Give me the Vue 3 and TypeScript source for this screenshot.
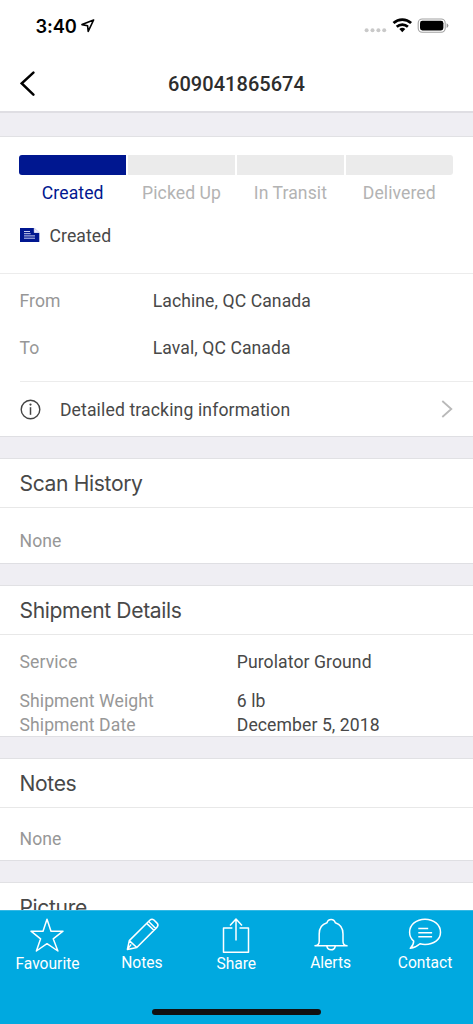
<script setup lang="ts">
interface Step { label: string; active: boolean }
interface Row { label: string; value: string }

const trackingNumber = '609041865674'
const steps: Step[] = [
  { label: 'Created', active: true },
  { label: 'Picked Up', active: false },
  { label: 'In Transit', active: false },
  { label: 'Delivered', active: false },
]
const route: Row[] = [
  { label: 'From', value: 'Lachine, QC Canada' },
  { label: 'To', value: 'Laval, QC Canada' },
]
const details: Row[] = [
  { label: 'Service', value: 'Purolator Ground' },
  { label: 'Shipment Weight', value: '6 lb' },
  { label: 'Shipment Date', value: 'December 5, 2018' },
]
</script>

<template>
  <div class="screen">
    <header class="top">
      <div class="status">
        <span class="time">3:40</span>
        <svg class="loc" width="14" height="14" viewBox="0 0 14 14"><path d="M12.6 1 1 5.6l5.6 1.2.6 5.6z" fill="none" stroke="#000" stroke-width="1.6" stroke-linejoin="round" /></svg>
        <svg class="indicators" width="86" height="16" viewBox="0 0 86 16">
          <g fill="#c9c9c9"><circle cx="3.6" cy="12.2" r="2" /><circle cx="9.5" cy="12.2" r="2" /><circle cx="15.4" cy="12.2" r="2" /><circle cx="21.2" cy="12.2" r="2" /></g>
          <g fill="none" stroke="#000" stroke-width="2.7"><path d="M30.5 5a13 13 0 0 1 17.6 0" /><path d="M33.7 8.8a8.3 8.3 0 0 1 11.2 0" /></g>
          <path d="M36.3 11.1a4.7 4.7 0 0 1 6 0l-3 3.2z" />
          <rect x="55.2" y="1" width="27" height="13.2" rx="4" fill="none" stroke="#a2a2a2" stroke-width="1.1" />
          <rect x="57" y="2.8" width="23.4" height="9.6" rx="2.4" />
          <path d="M83.6 5.2q1.8.7 1.8 2.4t-1.8 2.4z" fill="#999" />
        </svg>
      </div>
      <div class="nav">
        <svg class="back" width="16" height="26" viewBox="0 0 16 26"><path d="M13.4 1.6 1.8 12.4l11.6 11.2" fill="none" stroke="#000" stroke-width="2.5" stroke-linecap="round" stroke-linejoin="miter" /></svg>
        <h1>{{ trackingNumber }}</h1>
      </div>
    </header>

    <section class="card summary">
      <div class="steps">
        <div v-for="s in steps" :key="s.label" class="step" :class="{ active: s.active }">
          <div class="bar"></div>
          <span>{{ s.label }}</span>
        </div>
      </div>
      <div class="current">
        <svg width="20" height="15" viewBox="0 0 20 15">
          <path d="M0 0h14.3L19.3 4.7v9.4H0z" fill="#001790" />
          <path d="M14.3 0v4.5h5" fill="#eef" stroke="#fff" stroke-width=".7" />
          <path d="M4 3.5h6M4 5.7h6.6M4 7.9h11M4 10.2h11" stroke="#c9cef0" stroke-width="1" />
        </svg>
        <span>Created</span>
      </div>
      <dl class="route">
        <div v-for="r in route" :key="r.label"><dt>{{ r.label }}</dt><dd>{{ r.value }}</dd></div>
      </dl>
      <div class="more">
        <svg class="info" width="21" height="21" viewBox="0 0 21 21"><circle cx="10.5" cy="10.5" r="9.3" fill="none" stroke="#444" stroke-width="1.4" /><path d="M10.5 8.2v7.6" stroke="#444" stroke-width="1.5" /><circle cx="10.5" cy="5.6" r="1.1" fill="#444" /></svg>
        <span>Detailed tracking information</span>
        <svg class="chevron" width="12" height="18" viewBox="0 0 12 18"><path d="m1.3 1 9 8-9 8" fill="none" stroke="#b9b9b9" stroke-width="1.8" /></svg>
      </div>
    </section>

    <section class="card scan">
      <h2>Scan History</h2>
      <p>None</p>
    </section>

    <section class="card shipment">
      <h2>Shipment Details</h2>
      <dl class="details">
        <div v-for="d in details" :key="d.label"><dt>{{ d.label }}</dt><dd>{{ d.value }}</dd></div>
      </dl>
    </section>

    <section class="card notes">
      <h2>Notes</h2>
      <p>None</p>
    </section>

    <section class="card picture">
      <h2>Picture</h2>
    </section>

    <nav class="tabs">
      <a class="tab low">
        <svg width="36" height="36" viewBox="0 0 36 36"><path d="M18 2.2 22 14.2h12L24.2 21.8l4.7 12.2L18 26.7 7.4 34l4.2-12.2L2 14.2h12z" /></svg>
        <span>Favourite</span>
      </a>
      <a class="tab">
        <svg width="36" height="36" viewBox="0 0 36 36"><path d="M3.4 33.4 5.3 24.6 25.8 4.3Q27.7 2.5 29.7 3.8l3.3 3.3q1.9 2 .1 4L12.8 31.5zM5.3 24.6l7.5 6.9M22.7 7.4l7.2 6.9M24.7 5.5l7 7M3.4 33.4l3.8-5" /></svg>
        <span>Notes</span>
      </a>
      <a class="tab low">
        <svg width="36" height="36" viewBox="0 0 36 36"><path d="M14.4 11H5.5v24.2h25V11h-9M18 23.5V2M12 8.4 18 2l6 6.4" /></svg>
        <span>Share</span>
      </a>
      <a class="tab">
        <svg width="36" height="36" viewBox="0 0 36 36"><path d="M2 29.8Q6.2 29.2 6.2 25.4V18Q6.2 9 14 6.8q.8-3.4 4.1-3.4t4.2 3.4Q30 9.2 30 18v7.4q0 3.8 4 4.4zM13.8 30q.8 3.8 4.3 3.8t4.2-3.8" /></svg>
        <span>Alerts</span>
      </a>
      <a class="tab">
        <svg width="36" height="36" viewBox="0 0 36 36"><path d="M3.3 32.3Q6.8 29 6.7 25.1 2.6 21.6 2.6 16.2C2.6 8.7 9.3 3.2 18 3.2S33.5 8.7 33.5 16.2 26.8 28.4 18 28.4q-2.7 0-5-.7-4.2 3.8-9.7 4.6z" /><path d="M11.3 12.5h9.9M11.3 16.7h13.8M11.3 20.8h13.8" /></svg>
        <span>Contact</span>
      </a>
      <div class="home"></div>
    </nav>
  </div>
</template>

<style>
body { margin: 0; background: #efeef3; }
</style>

<style scoped>
* { box-sizing: border-box; }
.screen {
  width: 473px; height: 1024px; overflow: hidden;
  display: flex; flex-direction: column;
  background: #efeef3; color: #484848;
  font: 17.6px/24px Roboto, sans-serif; letter-spacing: .08px;
}
h1, h2, p, dl, dt, dd { margin: 0; font-weight: 400; }
.top { height: 113px; flex: none; background: #fff; border-bottom: 2px solid #dfdee3; }
.status { height: 52px; padding: 0 24px 0 35.5px; display: flex; align-items: center; }
.time { font: 600 18.3px/24px Inter, sans-serif; color: #000; letter-spacing: -.1px; }
.loc { margin-left: 4.5px; }
.indicators { margin-left: auto; }
.nav { height: 63px; display: grid; grid-template-columns: 40px 1fr 40px; align-items: center; padding: 0 20px; }
h1 { font-size: 20px; font-weight: 500; color: #2d2d2d; text-align: center; letter-spacing: .04px; }
.card { flex: none; background: #fff; border-top: 1px solid #e1e1e4; border-bottom: 1px solid #dfdfe3; margin-bottom: 21px; overflow: hidden; }
.summary { height: 301px; margin-top: 23px; }
.steps { display: flex; gap: 1.5px; padding: 18px 20px 0 19px; }
.step { flex: 1; text-align: center; color: #b3b3b3; }
.bar { height: 20px; background: #ebebeb; margin-bottom: 6px; }
.step:first-child .bar { border-radius: 3px 0 0 3px; }
.step:nth-child(4) .bar { border-radius: 0 3px 3px 0; }
.active { color: #001790; }
.active .bar { background: #001790; }
.current { height: 69px; padding: 0 20px 7px; display: flex; align-items: center; gap: 9.5px; border-bottom: 1px solid #ececec; }
.route { margin: 0 0 0 19.5px; height: 108px; padding-top: 15px; border-bottom: 1px solid #ececec; }
.route > div { display: grid; grid-template-columns: 133.2px 1fr; height: 46.5px; }
dt, p { color: #979797; }
.more { display: flex; align-items: center; height: 55px; padding: 0 20px 0 19.5px; }
.more span { margin-left: 19.4px; flex: 1; letter-spacing: .13px; }
.info { margin-bottom: 1px; }
.chevron { margin-bottom: 2px; }
h2 { font: 400 21.1px/49px Inter, sans-serif; height: 49px; padding-left: 19.5px; border-bottom: 1px solid #e8e8e8; letter-spacing: -.36px; }
p { padding: 21px 19.5px 0; }
.scan { height: 106px; }
.scan h2 { line-height: 50px; }
.shipment { height: 152px; }
.details { padding: 15px 19.5px 0; }
.details > div { display: grid; grid-template-columns: 217.3px 1fr; height: 24px; }
.details > div:first-child { margin-bottom: 15px; }
.notes { height: 103px; }
.notes p { padding-top: 19px; }
.picture { flex: 1; margin: 0; border-bottom: 0; min-height: 0; }
.tabs { flex: none; height: 114px; background: #00a9e0; border-top: 1px solid #35b9e5; display: grid; grid-template-columns: repeat(5, 94.4px); grid-template-rows: 98px 5px; color: #fff; padding-left: .3px; }
.tab { display: flex; flex-direction: column; align-items: center; padding-top: 5px; font-size: 15.6px; line-height: 20px; letter-spacing: 0; }
.tab svg { fill: none; stroke: #fff; stroke-width: 1.5; stroke-linejoin: round; margin-bottom: 1px; }
.tab.low { padding-top: 6px; }
.home { grid-column: 1 / -1; justify-self: center; width: 169px; height: 5.5px; border-radius: 3px; background: #111; }
</style>
